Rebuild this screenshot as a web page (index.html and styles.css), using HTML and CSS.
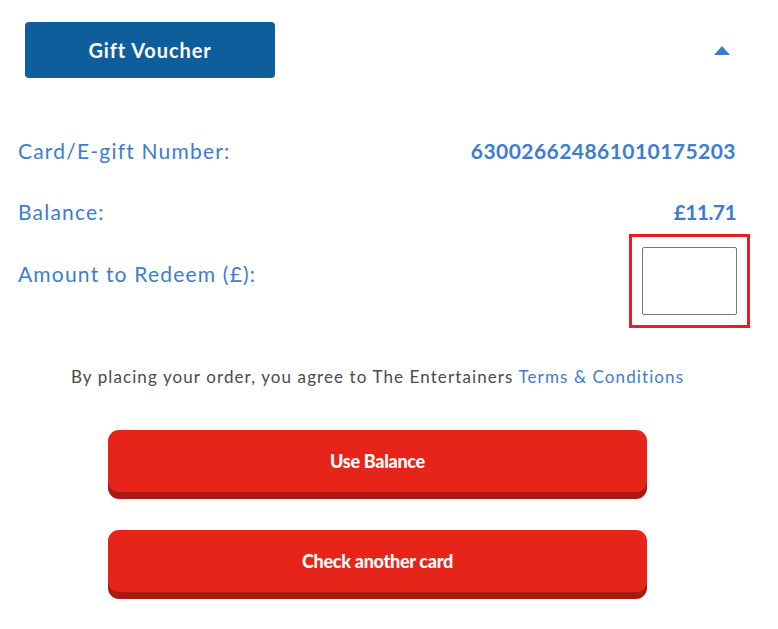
FILE: index.html
```html
<!DOCTYPE html>
<html lang="en">
<head>
<meta charset="utf-8">
<title>Gift Voucher</title>
<link rel="stylesheet" href="styles.css">
</head>
<body>
<div class="page">
  <div class="header">
    <button class="tab-btn" type="button">Gift Voucher</button>
    <svg class="caret" width="16" height="9" viewBox="0 0 16 9"><path d="M0 9 L8 0 L16 9 Z" fill="#3a7cc9"/></svg>
  </div>
  <div class="details">
    <div class="row row-number">
      <span class="label">Card/E-gift Number:</span>
      <span class="value">630026624861010175203</span>
    </div>
    <div class="row row-balance">
      <span class="label">Balance:</span>
      <span class="value">£11.71</span>
    </div>
    <div class="row row-amount">
      <span class="label label-top">Amount to Redeem (£):</span>
      <span class="highlight"><input class="amount-input" type="text" aria-label="Amount to Redeem"></span>
    </div>
  </div>
  <p class="terms">By placing your order, you agree to The Entertainers <a href="#" class="terms-link">Terms &amp; Conditions</a></p>
  <div class="actions">
    <button class="red-btn" type="button">Use Balance</button>
    <button class="red-btn" type="button">Check another card</button>
  </div>
</div>
</body>
</html>
```
FILE: styles.css
```css
html, body {
  margin: 0;
  padding: 0;
  background: #ffffff;
}
body {
  font-family: Lato, "Noto Sans", sans-serif;
}
.page {
  width: 755px;
  padding-bottom: 30px;
}
.header {
  display: flex;
  justify-content: space-between;
  align-items: center;
  padding: 22px 25px 0 25px;
}
.tab-btn {
  width: 250px;
  height: 56px;
  background: #0e5e9c;
  color: #ffffff;
  border: none;
  border-radius: 4px;
  font-family: Lato, sans-serif;
  font-weight: 700;
  font-size: 20px;
  letter-spacing: 0.9px;
  padding: 0;
}
.caret {
  display: block;
}
.details {
  padding: 48px 19px 0 18px;
}
.row {
  display: flex;
  justify-content: space-between;
  align-items: center;
  height: 48px;
  color: #3d7dcc;
}
.row-balance {
  margin-top: 13px;
}
.row-amount {
  margin-top: 12px;
  height: 68px;
  align-items: flex-start;
}
.label {
  font-size: 21px;
  font-weight: 400;
  letter-spacing: 1.2px;
}
.label-top {
  line-height: 42px;
  padding-top: 6px;
}
.value {
  font-size: 21px;
  font-weight: 700;
  letter-spacing: 0.45px;
}
.row-balance .value {
  letter-spacing: -0.6px;
}
.highlight {
  display: block;
  outline: 3px solid #e31e24;
  outline-offset: 10px;
  margin-right: -1px;
}
.amount-input {
  display: block;
  width: 95px;
  height: 68px;
  box-sizing: border-box;
  border: 1px solid #767676;
  border-radius: 2px;
  margin: 0;
  padding: 0;
  font-size: 18px;
}
.terms {
  margin: 50px 0 0 0;
  text-align: center;
  font-size: 17px;
  line-height: 24px;
  color: #4a4a4a;
  letter-spacing: 1.1px;
}
.terms-link {
  color: #3d7dcc;
  text-decoration: none;
}
.actions {
  display: flex;
  flex-direction: column;
  align-items: center;
  gap: 38px;
  margin-top: 41px;
}
.red-btn {
  width: 539px;
  height: 62px;
  background: #e62419;
  color: #ffffff;
  border: none;
  border-radius: 11px;
  box-shadow: 0 7px 0 #a91b12;
  font-family: Lato, sans-serif;
  font-weight: 900;
  font-size: 18px;
  letter-spacing: -0.3px;
  padding: 0;
}
```
